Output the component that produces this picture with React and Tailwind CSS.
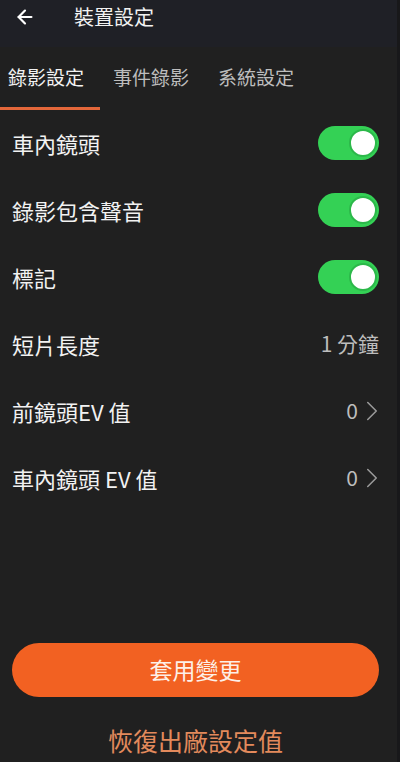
import { ArrowLeft, ChevronRight } from 'lucide-react';

const FONT = { fontFamily: '"Noto Sans CJK TC", "Noto Sans", sans-serif' };

function Toggle() {
  return (
    <div className="w-[61px] h-[34px] rounded-full bg-[#34d155] flex items-center justify-end pr-[2px]">
      <div className="w-[28px] h-[28px] rounded-full bg-white border-[2px] border-[#2cb84a]" />
    </div>
  );
}

function Row({ label, children }) {
  return (
    <div className="h-[67px] flex items-center justify-between pl-3 pr-[18px]">
      <span className="text-[22px] text-[#f2f2f2] leading-none">{label}</span>
      {children}
    </div>
  );
}

function Chevron() {
  return <ChevronRight size={34} strokeWidth={1.1} className="-ml-[3px] -mr-[10px] text-[#9a9a9a]" />;
}

export default function App() {
  return (
    <div className="w-[400px] h-[762px] bg-[#202020] flex flex-col overflow-hidden border-r-[3px] border-[#18181a]" style={FONT}>
      {/* Header */}
      <div className="h-[47px] bg-[#1f2026] flex items-center pl-[14px] pb-[14px]">
        <ArrowLeft size={22} strokeWidth={2.4} className="text-white" />
        <span className="ml-[38px] text-[20px] text-[#f2f2f2] leading-none">裝置設定</span>
      </div>

      {/* Tabs */}
      <div className="relative h-[63px] flex items-center pl-2 gap-[29px] text-[19px] leading-none pb-[5px]">
        <span className="text-[#f2f2f2]">錄影設定</span>
        <span className="text-[#bdbdbd]">事件錄影</span>
        <span className="text-[#bdbdbd]">系統設定</span>
        <div className="absolute left-0 bottom-0 w-[100px] h-[3px] bg-[#e3673a]" />
      </div>

      {/* Settings */}
      <div className="-mt-[1px] flex flex-col">
        <Row label="車內鏡頭"><Toggle /></Row>
        <Row label="錄影包含聲音"><Toggle /></Row>
        <Row label="標記"><Toggle /></Row>
        <Row label="短片長度">
          <span className="text-[21px] text-[#bdbdbd] leading-none">1 分鐘</span>
        </Row>
        <Row label="前鏡頭EV 值">
          <span className="flex items-center text-[21px] text-[#bdbdbd] leading-none">
            0
            <Chevron />
          </span>
        </Row>
        <Row label="車內鏡頭 EV 值">
          <span className="flex items-center text-[21px] text-[#bdbdbd] leading-none">
            0
            <Chevron />
          </span>
        </Row>
      </div>

      {/* Actions */}
      <div className="mt-auto flex flex-col items-center pl-3 pr-[18px] pb-[5px]">
        <button className="w-full h-[54px] rounded-full bg-[#f26122] text-[23px] text-[#fdf0e8] leading-none pb-[2px]">
          套用變更
        </button>
        <button className="mt-[26px] h-[34px] text-[25px] text-[#e38a5c] leading-none">
          恢復出廠設定值
        </button>
      </div>
    </div>
  );
}
